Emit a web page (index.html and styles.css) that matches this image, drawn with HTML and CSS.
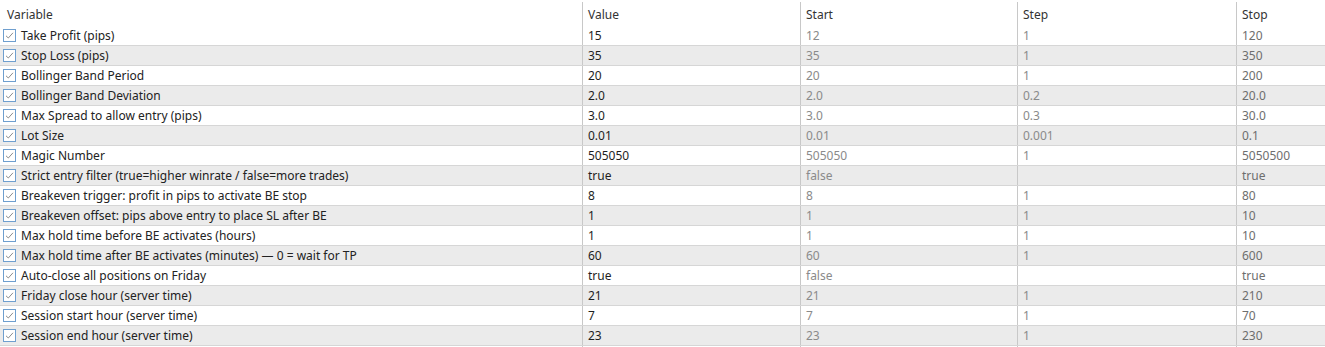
FILE: index.html
```html
<!DOCTYPE html>
<html>
<head>
<meta charset="utf-8">
<link rel="stylesheet" href="styles.css">
</head>
<body>
<div class="grid">
  <div class="row head">
    <div class="c c-var">Variable</div>
    <div class="c">Value</div>
    <div class="c">Start</div>
    <div class="c">Step</div>
    <div class="c">Stop</div>
  </div>
  <div id="rows"></div>
  <div class="row filler"><div class="c c-var"></div><div class="c"></div><div class="c"></div><div class="c"></div><div class="c"></div></div>
</div>
<script src="app.js"></script>
</body>
</html>
```
FILE: app.js
```js
const data = [
  ["Take Profit (pips)", "15", "12", "1", "120"],
  ["Stop Loss (pips)", "35", "35", "1", "350"],
  ["Bollinger Band Period", "20", "20", "1", "200"],
  ["Bollinger Band Deviation", "2.0", "2.0", "0.2", "20.0"],
  ["Max Spread to allow entry (pips)", "3.0", "3.0", "0.3", "30.0"],
  ["Lot Size", "0.01", "0.01", "0.001", "0.1"],
  ["Magic Number", "505050", "505050", "1", "5050500"],
  ["Strict entry filter (true=higher winrate / false=more trades)", "true", "false", "", "true"],
  ["Breakeven trigger: profit in pips to activate BE stop", "8", "8", "1", "80"],
  ["Breakeven offset: pips above entry to place SL after BE", "1", "1", "1", "10"],
  ["Max hold time before BE activates (hours)", "1", "1", "1", "10"],
  ["Max hold time after BE activates (minutes) \u2014 0 = wait for TP", "60", "60", "1", "600"],
  ["Auto-close all positions on Friday", "true", "false", "", "true"],
  ["Friday close hour (server time)", "21", "21", "1", "210"],
  ["Session start hour (server time)", "7", "7", "1", "70"],
  ["Session end hour (server time)", "23", "23", "1", "230"]
];
const box = '<svg class="cb" width="13" height="13" viewBox="0 0 13 13"><rect x="0.5" y="0.5" width="12" height="12" fill="#fff" stroke="#6f9fcf"/><path d="M3 6.8 L5.3 9 L10 3.8" fill="none" stroke="#8c8c8c" stroke-width="1"/></svg>';
const host = document.getElementById("rows");
data.forEach((r, i) => {
  const row = document.createElement("div");
  row.className = "row item" + (i % 2 ? " alt" : "");
  row.innerHTML =
    '<div class="c c-var">' + box + '<span>' + r[0] + '</span></div>' +
    '<div class="c val">' + r[1] + '</div>' +
    '<div class="c dim">' + r[2] + '</div>' +
    '<div class="c dim">' + r[3] + '</div>' +
    '<div class="c stop">' + r[4] + '</div>';
  host.appendChild(row);
});
```
FILE: styles.css
```css
html, body { margin: 0; padding: 0; background: #fff; }
body {
  font-family: "Noto Sans", "Open Sans", sans-serif;
  font-size: 12px;
  color: #222;
  width: 1325px;
  height: 347px;
  overflow: hidden;
}
.grid { display: flex; flex-direction: column; }
.row {
  display: grid;
  grid-template-columns: 582px 218px 217px 219px 1fr;
}
.c {
  border-left: 1px solid #c8c8c8;
  padding-left: 5px;
  display: flex;
  align-items: center;
  white-space: nowrap;
  overflow: hidden;
}
.c-var { border-left: none; padding-left: 7px; }
.head { height: 24px; padding-top: 2px; }
.head .c { color: #333; }
.item {
  height: 19px;
  border-bottom: 1px solid #d6d6d6;
}
.item.alt { background: #ebebeb; }
.item .c-var { padding-left: 3px; }
.cb { flex: none; margin-right: 5px; }
.val { color: #1e1e1e; }
.dim { color: #8a8a8a; }
.stop { color: #6e6e6e; }
.filler { height: 2px; }
```
